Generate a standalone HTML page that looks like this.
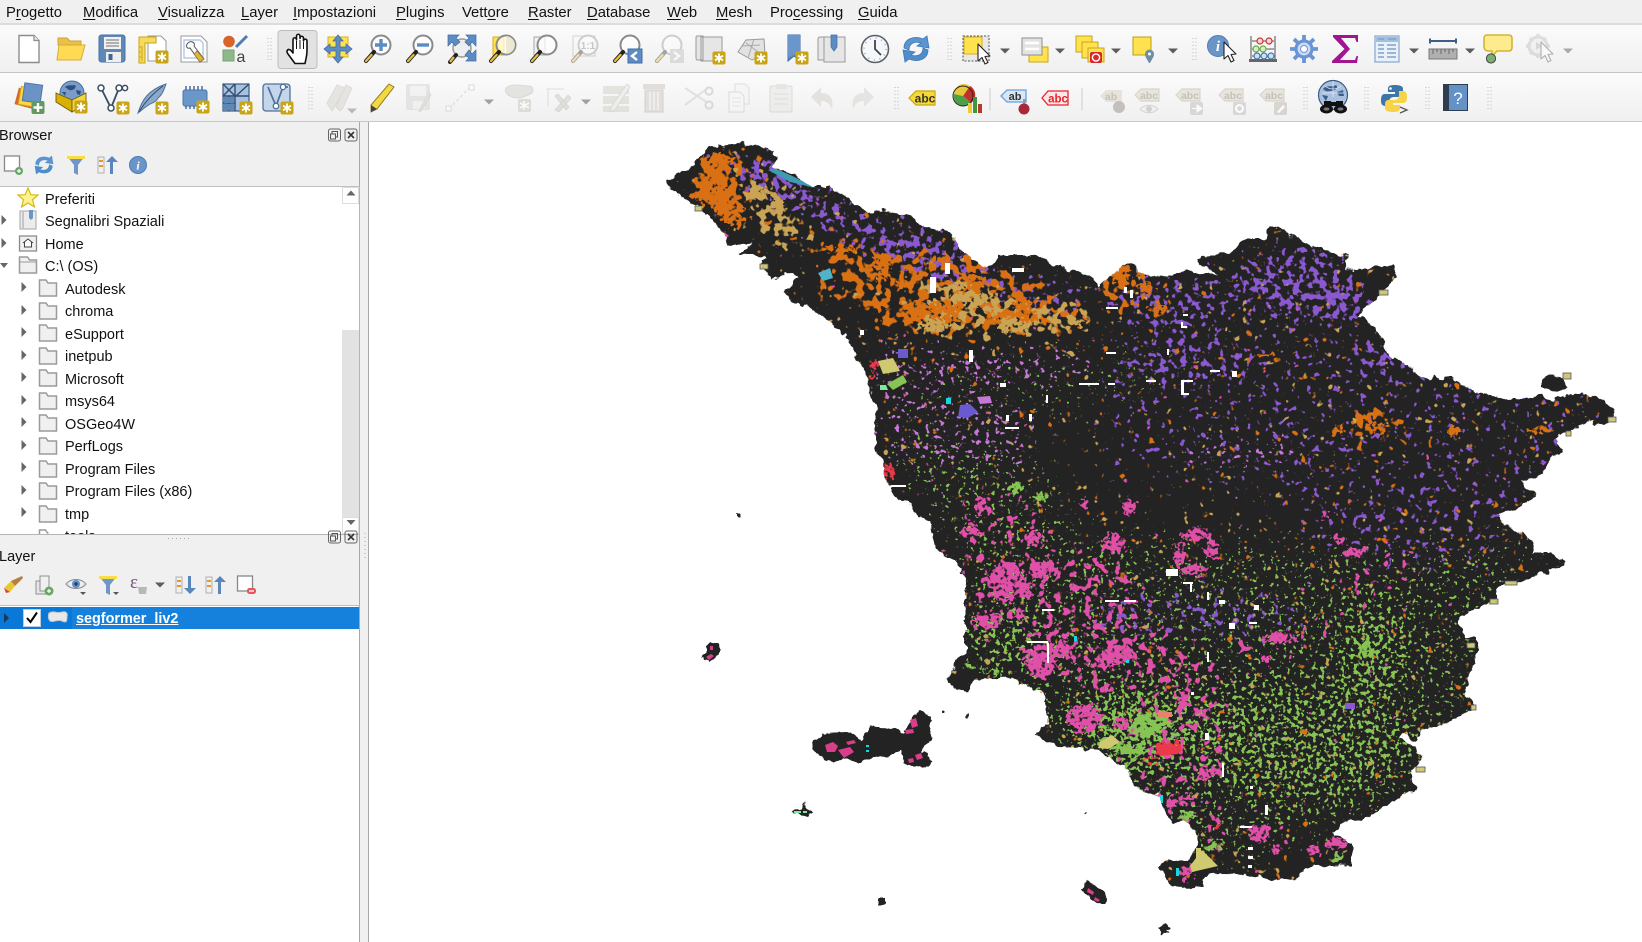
<!DOCTYPE html>
<html lang="it"><head><meta charset="utf-8"><title>QGIS</title>
<style>
html,body{margin:0;padding:0;width:1642px;height:942px;overflow:hidden;background:#f0f0f0;font-family:"Liberation Sans",sans-serif;color:#111}
.a{position:absolute;white-space:nowrap}
.m{top:4px;font-size:14.8px;line-height:18px}
.m u{text-decoration-thickness:1px;text-underline-offset:2px}
.t{font-size:14.5px;line-height:18px}
svg{position:absolute;left:0;top:0}
svg text{font-family:"Liberation Sans",sans-serif}
</style></head><body>
<div class="a" style="left:0;top:0;width:1642px;height:23px;background:#f0f0f0"></div>
<div class="a" style="left:0;top:23px;width:1642px;height:2px;background:#dcdcdc"></div>
<div class="a" style="left:0;top:25px;width:1642px;height:47px;background:linear-gradient(#fbfbfb,#f0f0f0)"></div>
<div class="a" style="left:0;top:72px;width:1642px;height:1px;background:#c4c4c4"></div>
<div class="a" style="left:0;top:73px;width:1642px;height:48px;background:linear-gradient(#fbfbfb,#f0f0f0)"></div>
<div class="a" style="left:0;top:121px;width:1642px;height:1px;background:#c8c8c8"></div>

<span class="a m" style="left:6px">P<u>r</u>ogetto</span>
<span class="a m" style="left:83px"><u>M</u>odifica</span>
<span class="a m" style="left:158px"><u>V</u>isualizza</span>
<span class="a m" style="left:241px"><u>L</u>ayer</span>
<span class="a m" style="left:293px"><u>I</u>mpostazioni</span>
<span class="a m" style="left:396px"><u>P</u>lugins</span>
<span class="a m" style="left:462px">Vett<u>o</u>re</span>
<span class="a m" style="left:528px"><u>R</u>aster</span>
<span class="a m" style="left:587px"><u>D</u>atabase</span>
<span class="a m" style="left:667px"><u>W</u>eb</span>
<span class="a m" style="left:716px"><u>M</u>esh</span>
<span class="a m" style="left:770px">Pro<u>c</u>essing</span>
<span class="a m" style="left:858px"><u>G</u>uida</span>

<!-- canvas -->
<div class="a" style="left:368px;top:122px;width:1274px;height:820px;background:#fff;border-left:1px solid #a8a8a8;box-sizing:border-box"></div>

<!-- map -->
<svg width="1642" height="942" viewBox="0 0 1642 942">
<defs>
<path id="tus" d="M665 182L673 177 690 168 702 157 710 147 740 143 767 147 778 157 772 167 797 178 813 187 830 187 857 205 867 213 880 210 907 214 927 228 950 232 962 250 983 267 993 265 998 255 1033 255 1053 265 1093 277 1098 287 1123 265 1133 261 1136 264 1138 272 1160 278 1186 271 1218 275 1200 265 1197 258 1231 252 1245 238 1264 238 1269 228 1280 225 1290 235 1304 243 1325 252 1349 255 1345 268 1366 270 1377 265 1396 267 1394 278 1383 293 1366 308 1359 315 1375 327 1383 340 1390 357 1409 365 1420 377 1453 378 1473 392 1504 397 1511 400 1542 395 1553 400 1577 393 1598 397 1615 408 1612 420 1594 427 1591 420 1577 427 1556 438 1561 448 1549 463 1539 477 1520 482 1537 495 1529 502 1497 517 1513 528 1534 540 1532 553 1549 553 1565 560 1563 565 1542 573 1525 580 1497 587 1497 602 1463 613 1459 622 1463 638 1477 640 1480 647 1475 657 1466 687 1465 695 1472 700 1475 708 1446 723 1421 730 1415 740 1404 733 1399 738 1415 748 1423 757 1411 773 1418 787 1401 797 1387 807 1366 817 1342 823 1338 830 1332 833 1351 842 1351 865 1318 867 1304 868 1299 877 1283 882 1254 877 1228 873 1205 875 1204 885 1183 890 1166 880 1160 867 1167 860 1190 862 1197 843 1193 827 1183 820 1176 823 1166 813 1159 797 1135 787 1124 767 1100 750 1057 745 1033 735 1047 725 1048 703 1040 692 1018 683 1017 678 975 679 968 692 958 692 947 680 960 657 965 655 965 578 957 565 937 550 930 523 907 503 892 497 892 487 884 480 883 460 878 455 873 425 878 405 872 398 867 375 858 360 848 335 842 333 823 315 782 295 798 278 787 272 773 280 760 265 767 257 737 253 753 242 727 247 725 235 703 210 677 195Z"/>
<clipPath id="tc"><use href="#tus"/></clipPath>
<filter id="rough" filterUnits="userSpaceOnUse" x="360" y="120" width="1282" height="822" color-interpolation-filters="sRGB">
<feTurbulence type="fractalNoise" baseFrequency=".09" numOctaves="3" seed="5" result="n"/>
<feDisplacementMap in="SourceGraphic" in2="n" scale="10" xChannelSelector="R" yChannelSelector="G"/>
</filter>
<filter id="rough2" filterUnits="userSpaceOnUse" x="360" y="120" width="1282" height="822" color-interpolation-filters="sRGB">
<feTurbulence type="fractalNoise" baseFrequency=".16" numOctaves="2" seed="11" result="n"/>
<feDisplacementMap in="SourceGraphic" in2="n" scale="15" xChannelSelector="R" yChannelSelector="G" result="d"/>
<feTurbulence type="fractalNoise" baseFrequency=".24" numOctaves="2" seed="31"/>
<feColorMatrix type="matrix" values="0 0 0 0 0 0 0 0 0 0 0 0 0 0 0 8 0 0 0 -2.6" result="h"/>
<feComposite in="d" in2="h" operator="in"/>
</filter>
<filter id="fP" filterUnits="userSpaceOnUse" x="360" y="120" width="1282" height="822" color-interpolation-filters="sRGB">
<feGaussianBlur in="SourceAlpha" stdDeviation="12" result="b"/>
<feTurbulence type="fractalNoise" baseFrequency=".15" numOctaves="2" seed="3"/>
<feColorMatrix type="matrix" values="0 0 0 0 0 0 0 0 0 0 0 0 0 0 0 1 0 0 0 0" result="na"/>
<feComposite in="na" in2="b" operator="arithmetic" k1="0" k2="1" k3=".4" k4="0"/>
<feComponentTransfer result="m"><feFuncA type="linear" slope="15" intercept="-12.4"/></feComponentTransfer>
<feFlood flood-color="#8a58cf"/><feComposite in2="m" operator="in"/>
</filter>
<filter id="fO" filterUnits="userSpaceOnUse" x="360" y="120" width="1282" height="822" color-interpolation-filters="sRGB">
<feGaussianBlur in="SourceAlpha" stdDeviation="10" result="b"/>
<feTurbulence type="fractalNoise" baseFrequency=".11" numOctaves="2" seed="17"/>
<feColorMatrix type="matrix" values="0 0 0 0 0 0 0 0 0 0 0 0 0 0 0 1 0 0 0 0" result="na"/>
<feComposite in="na" in2="b" operator="arithmetic" k1="0" k2="1" k3=".4" k4="0"/>
<feComponentTransfer result="m"><feFuncA type="linear" slope="15" intercept="-11"/></feComponentTransfer>
<feFlood flood-color="#da7014"/><feComposite in2="m" operator="in"/>
</filter>
<filter id="fT" filterUnits="userSpaceOnUse" x="360" y="120" width="1282" height="822" color-interpolation-filters="sRGB">
<feGaussianBlur in="SourceAlpha" stdDeviation="8" result="b"/>
<feTurbulence type="fractalNoise" baseFrequency=".12" numOctaves="2" seed="23"/>
<feColorMatrix type="matrix" values="0 0 0 0 0 0 0 0 0 0 0 0 0 0 0 1 0 0 0 0" result="na"/>
<feComposite in="na" in2="b" operator="arithmetic" k1="0" k2="1" k3=".4" k4="0"/>
<feComponentTransfer result="m"><feFuncA type="linear" slope="15" intercept="-11"/></feComponentTransfer>
<feFlood flood-color="#c9a455"/><feComposite in2="m" operator="in"/>
</filter>
<filter id="fG" filterUnits="userSpaceOnUse" x="360" y="120" width="1282" height="822" color-interpolation-filters="sRGB">
<feGaussianBlur in="SourceAlpha" stdDeviation="16" result="b"/>
<feTurbulence type="fractalNoise" baseFrequency=".24" numOctaves="2" seed="41"/>
<feColorMatrix type="matrix" values="0 0 0 0 0 0 0 0 0 0 0 0 0 0 0 1 0 0 0 0" result="na"/>
<feComposite in="na" in2="b" operator="arithmetic" k1="0" k2="1" k3=".4" k4="0"/>
<feComponentTransfer result="m"><feFuncA type="linear" slope="15" intercept="-12.7"/></feComponentTransfer>
<feFlood flood-color="#86c553"/><feComposite in2="m" operator="in"/>
</filter>
<filter id="fK" filterUnits="userSpaceOnUse" x="360" y="120" width="1282" height="822" color-interpolation-filters="sRGB">
<feGaussianBlur in="SourceAlpha" stdDeviation="9" result="b"/>
<feTurbulence type="fractalNoise" baseFrequency=".13" numOctaves="2" seed="61"/>
<feColorMatrix type="matrix" values="0 0 0 0 0 0 0 0 0 0 0 0 0 0 0 1 0 0 0 0" result="na"/>
<feComposite in="na" in2="b" operator="arithmetic" k1="0" k2="1" k3=".4" k4="0"/>
<feComponentTransfer result="m"><feFuncA type="linear" slope="15" intercept="-11.8"/></feComponentTransfer>
<feFlood flood-color="#e04fa8"/><feComposite in2="m" operator="in"/>
</filter>
<filter id="fL" filterUnits="userSpaceOnUse" x="360" y="120" width="1282" height="822" color-interpolation-filters="sRGB">
<feGaussianBlur in="SourceAlpha" stdDeviation="10" result="b"/>
<feTurbulence type="fractalNoise" baseFrequency=".2" numOctaves="2" seed="77"/>
<feColorMatrix type="matrix" values="0 0 0 0 0 0 0 0 0 0 0 0 0 0 0 1 0 0 0 0" result="na"/>
<feComposite in="na" in2="b" operator="arithmetic" k1="0" k2="1" k3=".4" k4="0"/>
<feComponentTransfer result="m"><feFuncA type="linear" slope="15" intercept="-12.4"/></feComponentTransfer>
<feFlood flood-color="#c777d8"/><feComposite in2="m" operator="in"/>
</filter>
</defs>

<g filter="url(#rough)" fill="#232323">
<use href="#tus"/>
<path d="M812 740L823 733 847 732 862 740 868 727 893 728 902 733 920 710 932 717 930 743 920 750 930 760 925 768 907 765 902 747 887 758 873 757 860 762 827 760 813 750Z"/>
<path d="M708 643H717L721 652 710 663 702 657 708 652Z"/>
<path d="M792 812L803 808 805 799 807 807 812 812 808 818 793 816Z"/>
<path d="M1082 890L1088 880 1105 893 1103 905 1093 900Z"/>
<path d="M1542 378L1552 376 1563 378 1570 387 1553 393 1542 387Z"/>
<path d="M878 899H887V905H878Z"/>
<path d="M1160 928L1165 923 1170 925 1166 928 1169 931 1164 934Z"/>
<rect x="736" y="514" width="6" height="3"/><circle cx="943" cy="712" r="1.5"/><circle cx="969" cy="715" r="1.5"/><circle cx="1087" cy="814" r="1"/>
</g>

<!-- edge tan rects -->
<g fill="#cfc77c" stroke="#555" stroke-width=".8">
<rect x="1379" y="290" width="9" height="5"/><rect x="1563" y="373" width="8" height="6"/><rect x="1608" y="417" width="8" height="5"/><rect x="1566" y="431" width="5" height="5"/><rect x="1505" y="581" width="12" height="4"/><rect x="1490" y="599" width="8" height="5"/><rect x="1467" y="643" width="8" height="5"/><rect x="1471" y="705" width="5" height="5"/><rect x="1416" y="767" width="9" height="5"/><rect x="760" y="264" width="8" height="5"/><rect x="695" y="206" width="7" height="5"/>
</g>

<g clip-path="url(#tc)">
<g filter="url(#fG)" fill="#000">
<path d="M880 430L1000 440 1100 530 1300 540 1480 540 1540 520 1480 700 1400 800 1330 840 1200 880 1170 830 1030 730 960 650 960 560 900 480Z" fill-opacity=".5"/>
<ellipse cx="1135" cy="730" rx="60" ry="45" fill-opacity=".85"/>
<ellipse cx="1370" cy="650" rx="35" ry="45" fill-opacity=".7"/>
<ellipse cx="1300" cy="740" rx="120" ry="60" fill-opacity=".56"/>
<ellipse cx="1000" cy="640" rx="45" ry="20" fill-opacity=".75"/>
<path d="M960 350L1180 350 1150 420 880 420Z" fill-opacity=".36"/>
</g>
<g filter="url(#fP)" fill="#000">
<path d="M690 168L770 150 860 215 960 240 1000 280 1090 288 1075 320 950 290 860 250 780 205Z" fill-opacity=".92"/>
<ellipse cx="1295" cy="285" rx="65" ry="42" fill-opacity=".8"/>
<ellipse cx="1345" cy="305" rx="28" ry="22" fill-opacity=".85"/>
<ellipse cx="1170" cy="300" rx="70" ry="28" fill-opacity=".72"/>
<path d="M1100 330L1400 330 1600 410 1530 500 1380 520 1100 470Z" fill-opacity=".42"/>
<ellipse cx="1380" cy="360" rx="25" ry="14" fill-opacity=".85"/>
<ellipse cx="1190" cy="360" rx="60" ry="26" fill-opacity=".56"/>
<path d="M1090 590L1300 590 1300 640 1090 640Z" fill-opacity=".62"/>
<path d="M1300 500L1530 500 1480 580 1300 560Z" fill-opacity=".46"/>
</g>
<g filter="url(#fL)" fill="#000">
<path d="M860 340L1100 350 1090 380 880 400Z" fill-opacity=".55"/>
<path d="M880 400L1040 400 1040 470 880 470Z" fill-opacity=".52"/>
<path d="M1180 440L1300 430 1300 470 1180 470Z" fill-opacity=".5"/>
</g>
<g filter="url(#fO)" fill="#000">
<path d="M700 150L745 155 745 225 690 200Z" fill-opacity=".85"/>
<path d="M820 240L1000 260 1100 330 900 340 820 290Z" fill-opacity=".62"/>
<ellipse cx="1120" cy="285" rx="35" ry="20" fill-opacity=".66"/>
<ellipse cx="1370" cy="425" rx="35" ry="18" fill-opacity=".6"/>
</g>
<g filter="url(#fT)" fill="#000">
<path d="M730 170L790 190 810 250 760 240Z" fill-opacity=".65"/>
<path d="M920 280L1100 310 1050 335 930 330Z" fill-opacity=".7"/>
</g>
<g filter="url(#fK)" fill="#000">
<path d="M965 490L1040 500 1060 560 1000 620 960 600Z" fill-opacity=".42"/>
<path d="M1060 540L1130 560 1190 680 1090 690 1010 650Z" fill-opacity=".55"/>
<path d="M1260 640L1320 620 1360 560 1410 530 1430 560 1300 660Z" fill-opacity=".42"/>
<path d="M1180 640L1230 660 1230 830 1330 840 1180 850 1100 740Z" fill-opacity=".42"/>
</g>

<g filter="url(#rough2)">
<g fill="#da7014">
<path d="M704 160L722 150 736 160 720 172 728 192 742 205 745 218 735 228 722 218 708 205 690 197 702 182Z"/>
<ellipse cx="840" cy="250" rx="14" ry="5"/><ellipse cx="882" cy="262" rx="11" ry="8"/><ellipse cx="880" cy="276" rx="13" ry="4"/><path d="M905 303H960V322H905Z"/><path d="M985 312H1038V325H985Z"/><ellipse cx="970" cy="282" rx="14" ry="8"/><ellipse cx="942" cy="260" rx="8" ry="4"/><ellipse cx="1022" cy="305" rx="9" ry="7"/><ellipse cx="903" cy="285" rx="5" ry="5"/><ellipse cx="1121" cy="275" rx="10" ry="8"/><ellipse cx="1145" cy="287" rx="9" ry="4"/><ellipse cx="1159" cy="310" rx="8" ry="7"/><ellipse cx="1376" cy="427" rx="11" ry="5"/><ellipse cx="1366" cy="418" rx="8" ry="4"/><ellipse cx="1338" cy="430" rx="6" ry="4"/><ellipse cx="1454" cy="432" rx="8" ry="4"/><ellipse cx="1540" cy="431" rx="14" ry="3"/><ellipse cx="1266" cy="355" rx="10" ry="3"/><ellipse cx="1472" cy="447" rx="3" ry="2"/>
</g>
<g fill="#c9a455">
<ellipse cx="760" cy="193" rx="10" ry="7"/><ellipse cx="777" cy="205" rx="6" ry="8"/><ellipse cx="973" cy="298" rx="22" ry="6"/><ellipse cx="933" cy="325" rx="16" ry="8"/><ellipse cx="1013" cy="326" rx="14" ry="8"/><ellipse cx="957" cy="285" rx="11" ry="4"/><ellipse cx="1077" cy="322" rx="11" ry="3"/>
</g>
<g fill="#e04fa8">
<ellipse cx="1007" cy="582" rx="18" ry="20"/><ellipse cx="1043" cy="570" rx="16" ry="9"/><ellipse cx="1025" cy="590" rx="10" ry="7"/><ellipse cx="987" cy="620" rx="15" ry="8"/><ellipse cx="1017" cy="615" rx="8" ry="5"/><ellipse cx="1040" cy="662" rx="16" ry="17"/><ellipse cx="1060" cy="650" rx="12" ry="9"/><ellipse cx="1085" cy="718" rx="18" ry="14"/><ellipse cx="1113" cy="543" rx="12" ry="10"/><ellipse cx="1128" cy="507" rx="7" ry="8"/><ellipse cx="980" cy="505" rx="6" ry="8"/><ellipse cx="970" cy="530" rx="10" ry="6"/><ellipse cx="1033" cy="538" rx="10" ry="6"/><ellipse cx="1110" cy="658" rx="12" ry="9"/><ellipse cx="1195" cy="535" rx="14" ry="6"/><ellipse cx="1180" cy="555" rx="6" ry="12"/><ellipse cx="1212" cy="550" rx="6" ry="10"/><ellipse cx="1195" cy="570" rx="13" ry="5"/><ellipse cx="1355" cy="552" rx="12" ry="5"/><ellipse cx="1338" cy="540" rx="5" ry="4"/><ellipse cx="1325" cy="513" rx="3" ry="5"/><ellipse cx="1119" cy="655" rx="16" ry="10"/><ellipse cx="1278" cy="638" rx="16" ry="5"/><ellipse cx="1121" cy="723" rx="8" ry="7"/><ellipse cx="1207" cy="773" rx="9" ry="8"/><ellipse cx="1259" cy="833" rx="11" ry="8"/><ellipse cx="1335" cy="843" rx="10" ry="6"/><ellipse cx="1314" cy="850" rx="8" ry="4"/><ellipse cx="1278" cy="850" rx="5" ry="4"/><ellipse cx="1186" cy="873" rx="6" ry="7"/><ellipse cx="1183" cy="700" rx="5" ry="10"/><ellipse cx="1204" cy="715" rx="6" ry="4"/><ellipse cx="1188" cy="797" rx="8" ry="4"/><ellipse cx="1171" cy="803" rx="5" ry="7"/><ellipse cx="1107" cy="688" rx="6" ry="5"/><ellipse cx="1245" cy="648" rx="6" ry="5"/><ellipse cx="1266" cy="660" rx="4" ry="5"/><ellipse cx="1083" cy="503" rx="5" ry="4"/>
</g>
<g fill="#86c553">
<ellipse cx="1145" cy="727" rx="14" ry="13"/><ellipse cx="1131" cy="750" rx="17" ry="6"/><ellipse cx="1163" cy="720" rx="6" ry="8"/><ellipse cx="1017" cy="488" rx="7" ry="6"/><ellipse cx="1040" cy="498" rx="6" ry="4"/><ellipse cx="972" cy="667" rx="5" ry="3"/><ellipse cx="990" cy="672" rx="10" ry="2"/><ellipse cx="1212" cy="847" rx="10" ry="4"/><ellipse cx="1368" cy="650" rx="6" ry="8"/><ellipse cx="1338" cy="858" rx="7" ry="4"/><ellipse cx="1187" cy="815" rx="10" ry="5"/>
</g>
<g fill="#e9394a">
<ellipse cx="1168" cy="748" rx="14" ry="6"/><ellipse cx="1150" cy="760" rx="10" ry="2"/><ellipse cx="890" cy="472" rx="5" ry="8"/><ellipse cx="873" cy="368" rx="3" ry="8"/><ellipse cx="1220" cy="827" rx="3" ry="3"/>
</g>
</g>
<!-- solid (crisp) features -->
<path d="M878 361L893 358 900 371 883 374Z" fill="#cfca70"/>
<path d="M887 384L903 375 907 382 893 390Z" fill="#86c553"/>
<path d="M898 349H908L908 358 898 358Z" fill="#6a5acd"/>
<path d="M960 405L970 404 978 412 968 418 958 417Z" fill="#6a5acd"/>
<path d="M977 397L990 396 992 403 980 404Z" fill="#c777d8"/>
<path d="M880 385H886L888 390 880 390Z" fill="#7ee8a0"/>
<path d="M946 398H951V404H946Z" fill="#16d6de"/>
<path d="M818 273L830 268 833 278 823 281Z" fill="#4fb3cc"/>
<path d="M768 170L778 168 800 180 813 187 820 189 790 182Z" fill="#3e9bb0"/>
<path d="M1100 742L1112 735 1120 742 1108 749 1098 748Z" fill="#cfca70"/>
<path d="M1190 866L1202 850 1218 866 1192 872Z" fill="#cfca70"/>
<rect x="1196" y="848" width="5" height="12" fill="#cfca70"/>
<path d="M1155 747L1170 743 1182 748 1178 754 1160 756Z" fill="#e9394a"/>
<path d="M1158 712h14v5h-14z" fill="#e8806e"/>
<path d="M1345 703h10v6h-10z" fill="#8a58cf"/>
<rect x="1126" y="660" width="3" height="3" fill="#16d6de"/>
<rect x="1176" y="868" width="3" height="8" fill="#16d6de"/>
<rect x="1160" y="795" width="3" height="8" fill="#16d6de"/>
<rect x="1074" y="636" width="3" height="5" fill="#16d6de"/>
<!-- nodata gaps -->
<g fill="#fff">
<rect x="969" y="350" width="4" height="12"/><rect x="930" y="277" width="6" height="16"/><rect x="945" y="263" width="5" height="11"/><rect x="1012" y="268" width="12" height="4"/><rect x="1079" y="383" width="20" height="2"/><rect x="1108" y="383" width="7" height="2"/><rect x="1006" y="415" width="3" height="6"/><rect x="1005" y="427" width="14" height="2"/><rect x="1029" y="414" width="3" height="7"/><rect x="1046" y="395" width="2" height="8"/><rect x="1000" y="383" width="6" height="4"/><rect x="1181" y="380" width="3" height="14"/><rect x="1181" y="380" width="12" height="2"/><rect x="1181" y="393" width="8" height="2"/><rect x="1210" y="370" width="10" height="2"/><rect x="1232" y="371" width="5" height="6"/><rect x="1146" y="380" width="10" height="2"/><rect x="1167" y="349" width="2" height="6"/><rect x="1183" y="314" width="5" height="2"/><rect x="1181" y="326" width="6" height="2"/><rect x="1181" y="322" width="2" height="6"/><rect x="1106" y="352" width="10" height="2"/><rect x="1124" y="287" width="3" height="6"/><rect x="1130" y="290" width="3" height="8"/><rect x="1106" y="307" width="12" height="2"/><rect x="1166" y="569" width="12" height="7"/><rect x="1183" y="582" width="10" height="2"/><rect x="1190" y="582" width="2" height="10"/><rect x="1207" y="592" width="2" height="8"/><rect x="1219" y="600" width="6" height="4"/><rect x="1254" y="605" width="5" height="5"/><rect x="1229" y="623" width="6" height="6"/><rect x="1249" y="622" width="8" height="2"/><rect x="1207" y="652" width="2" height="10"/><rect x="1124" y="600" width="12" height="2"/><rect x="1191" y="692" width="3" height="3"/><rect x="1205" y="733" width="4" height="7"/><rect x="1222" y="763" width="2" height="14"/><rect x="1250" y="786" width="3" height="3"/><rect x="1265" y="805" width="3" height="10"/><rect x="1240" y="826" width="12" height="2"/><rect x="1248" y="847" width="5" height="3"/><rect x="1248" y="856" width="5" height="3"/><rect x="1248" y="865" width="4" height="3"/><rect x="891" y="485" width="15" height="2"/><rect x="1047" y="643" width="2" height="20"/><rect x="1027" y="641" width="21" height="2"/><rect x="1042" y="609" width="12" height="2"/><rect x="1105" y="600" width="14" height="2"/><rect x="860" y="330" width="4" height="5"/>
</g>
</g>
<!-- island colours -->
<g fill="#d83f8a"><path d="M825 745l8-3 5 4-3 6-8 0z"/><path d="M838 750l12-3 4 5-10 6z"/><path d="M846 742l8-2 2 3-8 2z"/><path d="M910 720l6-2 2 8-6 2z"/><path d="M905 730l8-1 1 4-8 1z"/><path d="M915 755l6-2 2 5-6 2z"/><path d="M908 759l5-1 1 4-5 1z"/><path d="M706 657l5-3 3 2-5 4z"/><path d="M710 646h3v4h-3z"/><path d="M1088 888l6 4-1 3-6-3z"/><path d="M1095 897l5 3-2 2-4-2z"/></g>
<g fill="#7ee8a0"><rect x="794" y="811" width="7" height="2"/><rect x="803" y="811" width="4" height="2"/></g>
<g fill="#16d6de"><rect x="866" y="745" width="3" height="2"/><rect x="866" y="750" width="3" height="2"/></g>
</svg>

<!-- left docks -->
<div class="a" style="left:0;top:122px;width:368px;height:820px;background:#f0f0f0"></div>
<div class="a" style="left:359px;top:122px;width:1px;height:820px;background:#a8a8a8"></div>
<span class="a t" style="left:-1px;top:127px">Browser</span>
<div class="a" style="left:0;top:186px;width:360px;height:349px;background:#fff;border-top:1px solid #c0c0c0;border-bottom:1px solid #b5b5b5;border-right:1px solid #b5b5b5;box-sizing:border-box;overflow:hidden">
<div class="a" style="left:342px;top:0;width:17px;height:347px;background:#fff"></div>
<div class="a" style="left:342px;top:143px;width:17px;height:187px;background:#e2e2e2"></div>
<div class="a" style="left:342px;top:0;width:17px;height:17px;background:#fff;border:1px solid #ddd;box-sizing:border-box"></div>
<div class="a" style="left:342px;top:330px;width:17px;height:17px;background:#fff;border:1px solid #ddd;box-sizing:border-box"></div>
<span class="a t" style="left:45px;top:4px">Preferiti</span>
<span class="a t" style="left:45px;top:26px">Segnalibri Spaziali</span>
<span class="a t" style="left:45px;top:49px">Home</span>
<span class="a t" style="left:45px;top:71px">C:\ (OS)</span>
<span class="a t" style="left:65px;top:94px">Autodesk</span>
<span class="a t" style="left:65px;top:116px">chroma</span>
<span class="a t" style="left:65px;top:139px">eSupport</span>
<span class="a t" style="left:65px;top:161px">inetpub</span>
<span class="a t" style="left:65px;top:184px">Microsoft</span>
<span class="a t" style="left:65px;top:206px">msys64</span>
<span class="a t" style="left:65px;top:229px">OSGeo4W</span>
<span class="a t" style="left:65px;top:251px">PerfLogs</span>
<span class="a t" style="left:65px;top:274px">Program Files</span>
<span class="a t" style="left:65px;top:296px">Program Files (x86)</span>
<span class="a t" style="left:65px;top:319px">tmp</span>
<span class="a t" style="left:65px;top:341px">tools</span>
</div>
<span class="a t" style="left:-1px;top:548px">Layer</span>
<div class="a" style="left:0;top:605px;width:360px;height:337px;background:#fff;border-top:1px solid #c0c0c0;border-right:1px solid #a8a8a8;box-sizing:border-box"></div>
<div class="a" style="left:0;top:607px;width:359px;height:22px;background:#1581dd"></div>
<div class="a" style="left:0;top:607px;width:72px;height:22px;background:#0a78d7"></div>
<span class="a" style="left:76px;top:610px;font-size:14.4px;line-height:18px;font-weight:bold;color:#fff;text-decoration:underline">segformer_liv2</span>

<!-- icons -->
<svg width="1642" height="942" viewBox="0 0 1642 942">
<defs>
<g id="nb"><rect x="-6.5" y="-6.5" width="13" height="13" rx="2" fill="#c9a516"/><path d="M0-4.5V4.5M-4-2.3L4 2.3M-4 2.3L4-2.3" stroke="#fff" stroke-width="1.8"/></g>
<g id="mag"><circle cx="3" cy="-4" r="9.5" fill="#fff" fill-opacity=".7" stroke="#8a8a8a" stroke-width="2"/><path d="M-4 3L-12 12" stroke="#222" stroke-width="4" stroke-linecap="round"/><path d="M-6.5 6L-12 12" stroke="#e8bf3c" stroke-width="2.3" stroke-linecap="round"/></g>
<path id="car" d="M-5-2.5h10l-5 5z" fill="#5c5c5c"/>
<g id="grip"><path d="M0-11V11M3-11V11" stroke="#b5b5b5" stroke-width="1" stroke-dasharray="1 2.5"/></g>
<g id="fo"><path d="M-8.5-8h6.5l2 3h8.5v13h-17z" fill="#f0f0f0" stroke="#9a9a9a" stroke-width="1.5"/></g>
<path id="ar" d="M-2.5-5L2.5 0-2.5 5z" fill="#666"/>
<g id="tag"><path d="M-12 0L-6-6H12V6H-6Z" fill="#e3e0d8" stroke="#cfcabd" stroke-width="1.2"/><text x="2" y="4" font-size="10.5" font-weight="bold" fill="#b5b0a3" text-anchor="middle">abc</text></g>
<g id="cur"><path d="M0-10L0 7 4 3.5 7 10 10 8.5 7 2.5 12 2Z" fill="#fff" stroke="#222" stroke-width="1.1" stroke-linejoin="round"/></g>
</defs>

<!-- ROW 1 -->
<g transform="translate(29,49)"><path d="M-10-13.5H5L10-8.5V13.5H-10Z" fill="#fff" stroke="#8d8d8d" stroke-width="1.4"/><path d="M5-13.5V-8.5H10" fill="#e8e8e8" stroke="#8d8d8d" stroke-width="1.2"/></g>
<g transform="translate(71,49)"><path d="M-13-11H-4L-1-8H10V-4H-13Z" fill="#e8c04a" stroke="#cfa52d"/><path d="M-14 11L-12-4H14L10 11Z" fill="#ffda55" stroke="#d2ad35"/></g>
<g transform="translate(112,49)"><rect x="-13" y="-14" width="26" height="27" rx="2.5" fill="#5f88ba" stroke="#4a709e"/><rect x="-8" y="-12" width="17" height="12" fill="#f1f1f1"/><path d="M-6-9H7M-6-6H7M-6-3H7" stroke="#8a8a8a" stroke-width="1.2"/><rect x="-6" y="3" width="15" height="10" fill="#eee"/><rect x="-3.5" y="5" width="4" height="6" fill="#3f6594"/></g>
<g transform="translate(153,49)"><path d="M-5-13H8L13-8V12H-5Z" fill="#fff" stroke="#999"/><path d="M-14-12H3V-6H-8V14H-14Z" fill="#f6dc5a" stroke="#c9a516"/><path d="M-11-3V12M-14-2H-12M-14 3H-12M-14 8H-12" stroke="#c9a516"/><use href="#nb" x="9" y="8"/></g>
<g transform="translate(194,49)"><path d="M-13-13H7L13-7V13H-13Z" fill="#fff" stroke="#9a9a9a"/><path d="M-10-9H6L9-6V9H-10Z" fill="none" stroke="#b4c8e6" stroke-width="1.4"/><path d="M-6-6C-3-9 2-6 0-3L10 10 6 13-4-1C-7 0-9-3-6-6Z" fill="#fff" stroke="#555"/><path d="M3 2L10 10 6 13 0 5Z" fill="#e0b63a" stroke="#8d7a2c" stroke-width=".8"/></g>
<g transform="translate(235,49)"><circle cx="-6" cy="-7.5" r="5.8" fill="#d8642c"/><path d="M1-2L12-13" stroke="#4f7cb5" stroke-width="3"/><rect x="-12" y="1" width="11" height="11" fill="#8fb98a" stroke="#7ba07a"/><text x="6" y="13" font-size="16" fill="#444" text-anchor="middle">a</text></g>
<use href="#grip" x="268" y="49"/>
<rect x="278" y="30.5" width="39" height="38" rx="3" fill="#e2e2e2" stroke="#bdbdbd"/>
<g transform="translate(298,49)"><path d="M-3 14.5L-10 5C-12.5 1.5-9.5-1-7 1.5L-5 4V-9C-5-12-1.5-12-1.5-9V-12.5C-1.5-15.5 2-15.5 2-12.5V-10.5C2-13.5 5.5-13.5 5.5-10.5V-8C5.5-10.5 9-10.5 9-8V2C9 7 8 9 7 14.5Z" fill="#fff" stroke="#111" stroke-width="1.6" stroke-linejoin="round"/><path d="M-1.5-8V0M2-9V0M5.5-7V0" stroke="#111"/></g>
<g transform="translate(338,49)"><rect x="-10" y="-12" width="20" height="20" fill="#ffe24d" stroke="#d5ae20"/><path d="M0-14L5-8H2V-2H8V-5L14 0 8 5V2H2V8H5L0 14-5 8H-2V2H-8V5L-14 0-8-5V-2H-2V-8H-5Z" fill="#5d8cc3" stroke="#3e6da5" stroke-width=".8"/></g>
<g transform="translate(378,49)"><use href="#mag"/><path d="M3-10V2M-3-4H9" stroke="#5d8cc3" stroke-width="3.4"/></g>
<g transform="translate(420,49)"><use href="#mag"/><path d="M-3-4H9" stroke="#5d8cc3" stroke-width="3.4"/></g>
<g transform="translate(462,49)"><circle cx="0" cy="-1" r="9" fill="#eee" stroke="#999" stroke-width="1.5"/><path d="M-14-14H-3L-6-11-2-7-7-3-10-7-14-3ZM14-14H4L7-11 3-7 7-3 10-7 14-3ZM14 12H4L7 9 3 6 7 1 10 5 14 1Z" fill="#5d8cc3" stroke="#3e6da5" stroke-width=".7"/><path d="M-6 6L-12 13" stroke="#222" stroke-width="4" stroke-linecap="round"/><path d="M-8 8L-12 13" stroke="#e8bf3c" stroke-width="2.3"/></g>
<g transform="translate(503,49)"><rect x="-10" y="-12" width="11" height="18" fill="#ffe24d" stroke="#d5ae20"/><use href="#mag"/><path d="M3-13A9 9 0 0 1 3 5Z" fill="#e8e2c8" fill-opacity=".8"/></g>
<g transform="translate(544,49)"><rect x="-10" y="-12" width="11" height="18" fill="#f1f1f1" stroke="#a8a8a8"/><use href="#mag"/></g>
<g transform="translate(585,49)" opacity=".38"><rect x="-12" y="-13" width="22" height="20" fill="none" stroke="#999"/><use href="#mag"/><text x="3" y="0" font-size="10" font-weight="bold" fill="#777" text-anchor="middle">1:1</text></g>
<g transform="translate(627,49)"><use href="#mag"/><rect x="1" y="0" width="14" height="14" fill="#5d8cc3" stroke="#3e6da5"/><path d="M10 3L5 7 10 11" fill="none" stroke="#fff" stroke-width="2.4"/></g>
<g transform="translate(669,49)" opacity=".38"><use href="#mag"/><rect x="1" y="0" width="14" height="14" fill="#b5b5b5"/><path d="M5 3L10 7 5 11" fill="none" stroke="#fff" stroke-width="2.4"/></g>
<g transform="translate(710,49)"><path d="M-13-13H-7V11H-13C-14 11-14 9-14 8V-10C-14-12-14-13-13-13ZM-9-12H12V12H-9Z" fill="#e6e6e6" stroke="#999"/><use href="#nb" x="9" y="9"/></g>
<g transform="translate(752,49)"><path d="M-14 3L-6-9 12-10 13 5 0 11Z" fill="#e2e2e2" stroke="#999"/><path d="M-10-3L8-4M-6-6L9 5M2-10L-4 9" stroke="#aaa"/><use href="#nb" x="9" y="9"/></g>
<g transform="translate(796,49)"><path d="M-8-14H4V12L-2 7-8 12Z" fill="#5d8cc3" stroke="#3e6da5"/><path d="M-8 8V-14H4V3L-8 8Z" fill="#6a96cb"/><use href="#nb" x="6" y="9"/></g>
<g transform="translate(833,49)"><path d="M-13-12C-15-12-15-10-15-9V11H-9V-12ZM-9-12H12V13H-9Z" fill="#e6e6e6" stroke="#999"/><path d="M-2-14H4V-2L1 2-2-2Z" fill="#5d8cc3" stroke="#3e6da5" stroke-width=".7"/></g>
<g transform="translate(875,49)"><circle r="13.5" fill="#f5f7fa" stroke="#5a6168" stroke-width="1.6"/><path d="M0-9V0L6 6" fill="none" stroke="#444" stroke-width="1.8"/><circle r="11" fill="none" stroke="#9ab" stroke-width="1.6" stroke-dasharray="1 4.8"/></g>
<g transform="translate(916,49)"><path d="M-12-1C-12-10-2-14 7-10L11-13 13-1 1-3 5-6C-1-8-7-6-7 1Z" fill="#5a95d0" stroke="#3e7ab8" stroke-width=".8"/><path d="M12 1C12 10 2 14-7 10L-11 13-13 1-1 3-5 6C1 8 7 6 7-1Z" fill="#4f8cca" stroke="#3e7ab8" stroke-width=".8"/></g>
<use href="#grip" x="948" y="49"/>
<g transform="translate(976,49)"><rect x="-13" y="-13" width="26" height="25" fill="#e8e8e8" stroke="#555" stroke-dasharray="2 1.5"/><rect x="-12" y="-12" width="18" height="17" fill="#ffe24d" stroke="#d5ae20"/><use href="#cur" x="2" y="5"/></g>
<use href="#car" x="1005" y="51"/>
<g transform="translate(1034,49)"><rect x="-5" y="-2" width="19" height="15" fill="#ffe24d" stroke="#c9a516"/><rect x="-12" y="-11" width="20" height="17" fill="#e3e3e3" stroke="#8f8f8f"/><path d="M-9-6H5M-9 0H5" stroke="#fff" stroke-width="2.6"/></g>
<use href="#car" x="1060" y="51"/>
<g transform="translate(1089,49)"><rect x="-13" y="-13" width="16" height="16" fill="#ffe24d" stroke="#c9a516"/><rect x="-7" y="-7" width="16" height="16" fill="#ffe24d" stroke="#c9a516"/><rect x="-1" y="-1" width="16" height="14" fill="#ffe24d" stroke="#c9a516"/><rect x="1" y="3" width="12" height="11" rx="2" fill="#d8292f"/><circle cx="7" cy="8.5" r="3.6" fill="none" stroke="#fff" stroke-width="1.4"/></g>
<use href="#car" x="1116" y="51"/>
<g transform="translate(1142,49)"><rect x="-9" y="-12" width="18" height="18" fill="#ffe24d" stroke="#b99f1c"/><path d="M7 14C5 10 3 8 3 5A4.2 4.2 0 0 1 12 5C12 8 10 10 8 14Z" fill="#6e8ea8"/><circle cx="7.5" cy="5" r="1.5" fill="#fff"/></g>
<use href="#car" x="1173" y="51"/>
<use href="#grip" x="1193" y="49"/>
<g transform="translate(1218,46)"><circle r="10.5" fill="#6a95c9" stroke="#507cb2"/><text x="0" y="5" font-size="15" font-weight="bold" font-style="italic" fill="#fff" text-anchor="middle" style="font-family:'Liberation Serif',serif">i</text></g><use href="#cur" x="1224" y="52"/>
<g transform="translate(1263,49)"><path d="M-12 13V-13M12 13V-13M-11-8H11M-11 0H11M-11 7H11" stroke="#777" stroke-width="1.3"/><rect x="-14" y="10" width="28" height="3" fill="#666"/><g fill="#f1d4d4" stroke="#c33" stroke-width="1.2"><circle cx="-3" cy="-8" r="3"/><circle cx="6" cy="-8" r="3"/></g><g fill="#d8edcb" stroke="#6a4" stroke-width="1.2"><circle cx="-7" cy="0" r="3"/><circle cx="0" cy="0" r="3"/></g><g fill="#cfe0f2" stroke="#47a" stroke-width="1.2"><circle cx="-6" cy="7" r="3"/><circle cx="1" cy="7" r="3"/><circle cx="8" cy="7" r="3"/></g></g>
<g transform="translate(1304,49)"><circle r="8" fill="#cfdcf2" stroke="#6a95d4" stroke-width="3.2"/><g stroke="#6a95d4" stroke-width="3.8"><path d="M0-14V-9M0 14V9M-14 0H-9M14 0H9M-10-10L-6-6M10 10L6 6M-10 10L-6 6M10-10L6-6"/></g><circle r="3.5" fill="#fff" stroke="#6a95d4"/></g>
<path transform="translate(1346,49)" d="M-13-14H12V-7H10.5L9-11H-5L4 0-6 11H9L10.5 7H12L11 14H-14V12L-1.5 0-13-12Z" fill="#a21592"/>
<g transform="translate(1387,49)"><rect x="-12" y="-13" width="24" height="26" fill="#e9f0f8" stroke="#8cadd2" stroke-width="1.3"/><rect x="-11" y="-12" width="22" height="5" fill="#a4bfde"/><path d="M-9-10H-3M1-10H9M-9-4H-3M0-4H9M-9 0H-3M0 0H9M-9 4H-3M0 4H9M-9 8H-3M0 8H9" stroke="#7ea2cc" stroke-width="1.5"/></g>
<use href="#car" x="1414" y="51"/>
<g transform="translate(1443,49)"><path d="M-13-8H13M-13-10.5V-5.5M13-10.5V-5.5" stroke="#3f5f86" stroke-width="2"/><rect x="-14" y="0" width="28" height="10" fill="#b0b0b0" stroke="#777"/><path d="M-10 0V5M-6 0V3M-2 0V5M2 0V3M6 0V5M10 0V3" stroke="#666"/></g>
<use href="#car" x="1470" y="51"/>
<g transform="translate(1498,49)"><path d="M-11-14H10C13-14 14-13 14-10V-2C14 1 13 2 10 2H-1L-6 7V2H-9C-13 2-14 0-14-3V-10C-14-13-13-14-11-14Z" fill="#fdeb8e" stroke="#d3b534" stroke-width="1.6"/><circle cx="-7" cy="9.5" r="4.6" fill="#7cae72" stroke="#444"/></g>
<g transform="translate(1539,49)" opacity=".33"><circle cx="-1" cy="-3" r="9" fill="#e4e4e4" stroke="#aaa" stroke-width="3"/><path d="M-1-15V-11M-1 5V9M-13-3H-9M7-3H11M-9-11L-6-8M7-11L4-8M-9 5L-6 2" stroke="#aaa" stroke-width="3.4"/><path d="M-3-7L3-3-3 1Z" fill="#999"/><use href="#cur" x="2" y="3"/></g>
<use href="#car" x="1568" y="51" opacity=".5"/>

<!-- ROW 2 -->
<g transform="translate(29.5,98)"><rect x="-13" y="-8" width="19" height="17" transform="rotate(15 -3 0)" fill="#d8662d"/><rect x="-10" y="-10" width="19" height="18" transform="rotate(10 0 0)" fill="#ffd83e" stroke="#d2ac1e"/><rect x="-6" y="-14" width="18" height="18" transform="rotate(8 3 -5)" fill="#6b93c7" stroke="#4f76a8"/><rect x="2" y="3" width="13" height="13" rx="2" fill="#619a60"/><path d="M8.5 5V14M4 9.5H13" stroke="#fff" stroke-width="2.4"/></g>
<g transform="translate(71,98)"><circle cx="1" cy="-5" r="12" fill="#7a9cc9" stroke="#47719f"/><path d="M-6-11C-3-14 1-12 4-13 6-10 2-7-2-8ZM5-8 10-7 9-3 6-4ZM-9-6-5-6-6-2Z" fill="#2f4f80"/><path d="M-15-5L1 2V14L-15 4Z" fill="#d8b000" stroke="#6b5a10" stroke-width=".9"/><path d="M1 2L15-5V5L1 14Z" fill="#f2d540" stroke="#6b5a10" stroke-width=".9"/><use href="#nb" x="10" y="9"/></g>
<g transform="translate(112,98)"><path d="M-11-10L-1 10 7-10H13" fill="none" stroke="#3a4d60" stroke-width="1.8"/><g fill="#fff" stroke="#3a4d60" stroke-width="1.5"><circle cx="-11" cy="-10" r="3"/><circle cx="-1" cy="10" r="3"/><circle cx="7" cy="-10" r="3"/><circle cx="13" cy="-10" r="2.6"/></g><use href="#nb" x="11" y="10"/></g>
<g transform="translate(152,98)"><path d="M-14 15C-10 2-4-8 14-14 12-8 10-3 6 0 5 3 1 5-2 6-5 8-8 10-14 15Z" fill="#8aa8c9" stroke="#4f7199"/><path d="M-13 14C-7 4 0-4 11-12" stroke="#2c4d75" fill="none"/><use href="#nb" x="10" y="10"/></g>
<g transform="translate(195,98)"><rect x="-12" y="-8" width="24" height="16" rx="2" fill="#6b96ca" stroke="#4a75a8"/><path d="M-9-12V-8M-5-12V-8M-1-12V-8M3-12V-8M7-12V-8M-9 8V11M-5 8V11M-1 8V11" stroke="#3f6592" stroke-width="1.4"/><use href="#nb" x="8" y="9"/></g>
<g transform="translate(236,98)"><rect x="-13" y="-14" width="26" height="27" fill="#a8c1df" stroke="#3a5b82" stroke-width="1.2"/><path d="M-13-14L-1-2M-13-2L-1-14M-1-14V13M-13-2H13M-13 5H-1M-7-2V13M13-14L0-2" stroke="#2f4e72" stroke-width="1.4"/><rect x="-12" y="-1" width="10" height="6" fill="#5f88b6"/><rect x="-12" y="6" width="10" height="6" fill="#5f88b6"/><use href="#nb" x="10" y="10"/></g>
<g transform="translate(277,98)"><rect x="-14" y="-14" width="27" height="27" rx="3" fill="#c5d6ea" stroke="#4f7199" stroke-width="1.3"/><path d="M-9-11L-1 8 6-11 11-11" fill="none" stroke="#4f7199" stroke-width="1.7"/><g fill="#fff" stroke="#4f7199" stroke-width="1.3"><circle cx="-1" cy="8" r="2.8"/><circle cx="6" cy="-11" r="2.6"/></g><use href="#nb" x="10" y="10"/></g>
<use href="#grip" x="309" y="98"/>
<!-- disabled -->
<g opacity=".55">
<g transform="translate(339,98)"><path d="M-7 13L-12 5-2-13 6-10-5 10ZM1 13L-3 9 7-13 13-10 4 10Z" fill="#d8d6d1" stroke="#c8c6c0"/></g>
<use href="#car" x="352" y="111" opacity=".7"/>
<g transform="translate(419,98)"><rect x="-13" y="-14" width="24" height="26" rx="2" fill="#d7d7d5"/><rect x="-9" y="-12" width="16" height="10" fill="#eee"/><rect x="-6" y="3" width="12" height="8" fill="#eee"/><path d="M12-3L3 12 0 14 2 9 10-6Z" fill="#d0cfc9" stroke="#bbb" stroke-width=".7"/></g>
<g transform="translate(461,98)"><path d="M-12 11L9-11" stroke="#cfcfcb" stroke-width="1.6" stroke-dasharray="3 2.5"/><rect x="-15" y="8" width="5" height="5" fill="#fff" stroke="#c4c4c4"/><rect x="8" y="-13" width="5" height="5" fill="#fff" stroke="#c4c4c4"/></g>
<use href="#car" x="489" y="102"/>
<g transform="translate(519,98)"><path d="M-13-10C-7-15 3-12 10-12 15-12 15-5 11-4 5-1-2 2-9-2-12-3-15-7-13-10Z" fill="#d5d4cf" stroke="#c0bfb8"/><rect x="-1" y="1" width="13" height="13" rx="2" fill="#ccc9c0"/><path d="M5 3V12M1 5L10 10M1 10L10 5" stroke="#fff" stroke-width="1.6"/></g>
<g transform="translate(560,98)"><path d="M-14-9H4M-12-9V8" stroke="#c8c8c8"/><path d="M-5 12L8-3 11 0-1 14ZM6 12L-5-2-2-4 9 9Z" fill="#cfcfca" stroke="#bcbcb6" stroke-width=".8"/></g>
<use href="#car" x="586" y="102"/>
<g transform="translate(616,98)"><rect x="-13" y="-12" width="26" height="8" fill="#d5d3cb"/><rect x="-13" y="-2" width="26" height="8" fill="#d5d3cb"/><rect x="-13" y="8" width="26" height="6" fill="#d5d3cb"/><path d="M11-14L14-11-1 12-6 14-5 9Z" fill="#e8e8e4" stroke="#c3c3bd"/></g>
<g transform="translate(655,98)"><rect x="-12" y="-14" width="22" height="5" fill="#cfc7c3"/><rect x="-10" y="-8" width="18" height="22" fill="#d5cdc8" stroke="#bbb2ad"/><path d="M-5-6V12M-1-6V12M3-6V12" stroke="#eee" stroke-width="1.6"/></g>
<g transform="translate(698,98)"><path d="M-13-10L10 5M-13 7L10-10" stroke="#cfcfca" stroke-width="2"/><circle cx="11" cy="7" r="3.6" fill="none" stroke="#c3c3bd" stroke-width="2"/><circle cx="11" cy="-7" r="3.6" fill="none" stroke="#c3c3bd" stroke-width="2"/></g>
<g transform="translate(739,98)"><path d="M-4-14H6L10-10V6H-4Z" fill="#f5f5f5" stroke="#c9c9c9"/><path d="M-10-6H1L5-2V14H-10Z" fill="#f7f7f7" stroke="#c4c4c4"/><path d="M-7 0H2M-7 4H2M-7 8H2" stroke="#d5d5d5"/></g>
<g transform="translate(781,98)"><rect x="-11" y="-12" width="22" height="26" rx="1.5" fill="#e8e8e6" stroke="#c6c6c2"/><rect x="-5" y="-14" width="10" height="5" fill="#d6d6d2"/><path d="M-7-4H7M-7 1H7M-7 6H7" stroke="#d0d0d0" stroke-width="1.3"/></g>
<g transform="translate(822,98)"><path d="M-11-1L-1-11V-5C8-5 12 1 10 11 7 4 3 3-1 3V9Z" fill="#d7d3cc"/></g>
<g transform="translate(863,98)"><path d="M11-1L1-11V-5C-8-5-12 1-10 11-7 4-3 3 1 3V9Z" fill="#d7d7d2"/></g>
</g>
<g transform="translate(380,98)"><path d="M9-14L14-11-3 11-9 14-9 7Z" fill="#f3d93f" stroke="#8d7a2c"/><path d="M-9 7L-3 11-9 14Z" fill="#444"/></g>
<use href="#grip" x="895" y="98"/>
<g transform="translate(922,98)"><path d="M-13 0L-6-7H13V7H-6Z" fill="#f5d935" stroke="#c9a516" stroke-width="1.2"/><text x="3" y="4.5" font-size="12" font-weight="bold" fill="#333" text-anchor="middle">abc</text></g>
<g transform="translate(966,98)"><path d="M-12-4A10 10 0 0 1 4-12L-3-2Z" fill="#e8c93a"/><path d="M4-12A10 10 0 0 1 5 5L-3-2Z" fill="#c0322c"/><path d="M-12-4L-3-2 5 5A10 10 0 0 1-12-4Z" fill="#4c9f46"/><circle cx="-3" cy="-2" r="10" fill="none" stroke="#222" stroke-width="1"/><rect x="2" y="5" width="4" height="10" fill="#efcb30"/><rect x="7" y="-1" width="4" height="16" fill="#3a9a3c"/><rect x="12" y="6" width="4" height="9" fill="#b73b2c"/></g>
<path d="M990 88V110M1082 88V110" stroke="#ccc"/>
<g transform="translate(1015,96)"><path d="M-14 0L-8-6H11V6H-8Z" fill="#d8e6f6" stroke="#6a9fdc" stroke-width="1.3"/><text x="0" y="4" font-size="11" font-weight="bold" fill="#333" text-anchor="middle">ab</text><rect x="8" y="3" width="2.5" height="7" fill="#999"/><circle cx="9" cy="13" r="5.5" fill="#a8283a"/></g>
<g transform="translate(1055,98)"><path d="M-13 0L-7-7H13V7H-7Z" fill="#fbe9e9" stroke="#e8212b" stroke-width="1.3"/><text x="3" y="4.5" font-size="11.5" font-weight="bold" fill="#e8212b" text-anchor="middle">abc</text></g>
<g opacity=".75"><g transform="translate(1110,96)"><path d="M-10 0L-4-6H12V6H-4Z" fill="#e0ddd3"/><text x="1" y="4" font-size="10.5" font-weight="bold" fill="#b5b0a3" text-anchor="middle">ab</text><circle cx="9" cy="11" r="6" fill="#b5afad"/></g>
<g transform="translate(1147,95)"><use href="#tag"/><path d="M-7 14C-2 9 6 9 11 14 6 19-2 19-7 14Z" fill="#f0f0f0" stroke="#c8c8c8"/><circle cx="2" cy="14" r="3" fill="#c5c5c5"/></g>
<g transform="translate(1188,95)"><use href="#tag"/><rect x="2" y="7" width="13" height="13" rx="2" fill="#cfcfcf"/><path d="M4 13.5H9V10L14 13.5 9 17V13.5" fill="#fff" stroke="#fff"/></g>
<g transform="translate(1231,95)"><use href="#tag"/><rect x="2" y="7" width="13" height="13" rx="2" fill="#cfcfcf"/><circle cx="8.5" cy="13.5" r="3.5" fill="none" stroke="#fff" stroke-width="2"/></g>
<g transform="translate(1272,95)"><use href="#tag"/><rect x="2" y="7" width="13" height="13" rx="2" fill="#cfccc4"/><path d="M5 17L11 10 13 12 7 18Z" fill="#fff"/></g></g>
<use href="#grip" x="1304" y="98"/>
<g transform="translate(1333,95)"><circle r="14.5" fill="#a9c0de" stroke="#3d5a82" stroke-width="1.2"/><path d="M-10-6C-6-11-1-7 3-10 6-7 2-4-3-4-6-3-8-4-10-6ZM4-3 10-5 11 1 6 1ZM-11 0-5 1-7 6Z" fill="#3b5f8c"/><path d="M-11-2H11M0-14V2M-8-9C-3-5 3-5 8-9" fill="none" stroke="#dfe8f3" stroke-width=".8"/><path d="M-9 6H-2V13H-9ZM3 6H10V13H3ZM-2 7H3V11H-2Z" fill="#111"/><ellipse cx="-6.5" cy="14" rx="6.5" ry="4.5" fill="#111"/><ellipse cx="7.5" cy="14" rx="6.5" ry="4.5" fill="#111"/><ellipse cx="-6.5" cy="14" rx="3" ry="1.6" fill="#777"/><ellipse cx="7.5" cy="14" rx="3" ry="1.6" fill="#777"/></g>
<use href="#grip" x="1365" y="98"/>
<g transform="translate(1394,98)"><path d="M0-13C-7-13-6-10-6-6H1V-4H-9C-13-4-13 0-13 3-13 7-11 8-8 8H-5V4C-5 1-3-1 0-1H6C8-1 9-3 9-5V-9C9-12 6-13 0-13Z" fill="#3d77aa"/><path d="M0 14C7 14 6 11 6 7H-1V5H9C13 5 13 1 13-2 13-6 11-7 8-7H5V-3C5 0 3 2 0 2H-6C-8 2-9 4-9 6V10C-9 13-6 14 0 14Z" fill="#f7d34a"/><circle cx="-3.5" cy="-9.5" r="1.3" fill="#fff"/><path d="M6 9L13 12 6 15" fill="none" stroke="#555" stroke-width="1.3"/></g>
<use href="#grip" x="1426" y="98"/>
<g transform="translate(1456,98)"><rect x="-13" y="-14" width="25" height="27" fill="#2f3d4f"/><rect x="-7" y="-13" width="18" height="25" fill="#6492c6"/><text x="2" y="6" font-size="17" fill="#fff" text-anchor="middle">?</text></g>
<use href="#grip" x="1488" y="98"/>

<!-- Browser dock -->
<g id="dockbtn"><rect x="328.5" y="129" width="12" height="12" rx="2" fill="none" stroke="#666"/><rect x="332" y="131.5" width="5.5" height="5.5" fill="none" stroke="#555"/><rect x="330.5" y="134" width="5" height="5" fill="#f0f0f0" stroke="#555"/><rect x="345" y="129" width="12" height="12" rx="2" fill="none" stroke="#666"/><path d="M348 132L354 138M354 132L348 138" stroke="#333" stroke-width="1.6"/></g>
<use href="#dockbtn" y="402"/>
<g transform="translate(13,165)"><rect x="-8.5" y="-9" width="15" height="15" fill="#fff" stroke="#888" stroke-width="1.3"/><circle cx="6" cy="6" r="4" fill="#67a868"/><path d="M4 6H8M6 4V8" stroke="#fff" stroke-width="1.2"/></g>
<g transform="translate(44,165) scale(.72)"><path d="M-12-1C-12-10-2-14 7-10L11-13 13-1 1-3 5-6C-1-8-7-6-7 1Z" fill="#5a95d0"/><path d="M12 1C12 10 2 14-7 10L-11 13-13 1-1 3-5 6C1 8 7 6 7-1Z" fill="#4f8cca"/></g>
<g transform="translate(76,165)"><path d="M-9-9H9L2 0V10L-2 8V0Z" fill="#6f96c7"/><rect x="-9" y="-9" width="18" height="3" fill="#f8de45"/></g>
<g transform="translate(108,165)"><path d="M-10-8H-4V8H-10Z" fill="none" stroke="#b0b0b0"/><path d="M-9-4H-5M-9 1H-5" stroke="#e29a2c" stroke-width="2"/><path d="M3 9V-3H8L2-9-4-3H0V9Z" transform="translate(2,0)" fill="#5a86bd"/></g>
<g transform="translate(138,165)"><circle r="8.5" fill="#6a95c9" stroke="#507cb2"/><text y="4.5" font-size="12" font-weight="bold" font-style="italic" fill="#fff" text-anchor="middle" style="font-family:'Liberation Serif',serif">i</text></g>
<path d="M351 190.5l-4.5 5h9z" fill="#666"/>
<path d="M346.5 520l4.5 5 4.5-5z" fill="#666"/>

<!-- tree icons -->
<path transform="translate(28,198)" d="M0-10L2.9-3.3 10-3 4.5 1.8 6.5 9 0 5 -6.5 9-4.5 1.8-10-3-2.9-3.3Z" fill="#fdf28c" stroke="#d4b81d" stroke-width="1.2"/>
<g transform="translate(28,220)"><path d="M-8-9H8V9H-8Z" fill="#ececec" stroke="#a5a5a5"/><path d="M-5-9V9" stroke="#c5c5c5" stroke-width="2"/><path d="M1-10H5V-2L3 0 1-2Z" fill="#6a95c9"/></g>
<g transform="translate(28,243)"><rect x="-8.5" y="-7" width="17" height="15" fill="#f0f0f0" stroke="#8b8b8b" stroke-width="1.3"/><path d="M-5 0L0-4 5 0M-3.5-1V4H3.5V-1" fill="#fff" stroke="#444"/></g>
<g transform="translate(28,265)"><path d="M-8.5-8h8l2 3h7v13h-17z" fill="#f0f0f0" stroke="#9a9a9a" stroke-width="1.5"/><path d="M-8.5-3H8.5" stroke="#9a9a9a"/></g>
<use href="#ar" x="4" y="220"/><use href="#ar" x="4" y="243"/><path d="M0 263h8l-4 5z" fill="#666"/>
<use href="#fo" x="48" y="288"/><use href="#fo" x="48" y="311"/><use href="#fo" x="48" y="333"/><use href="#fo" x="48" y="356"/><use href="#fo" x="48" y="378"/><use href="#fo" x="48" y="401"/><use href="#fo" x="48" y="423"/><use href="#fo" x="48" y="446"/><use href="#fo" x="48" y="469"/><use href="#fo" x="48" y="491"/><use href="#fo" x="48" y="514"/>
<path d="M39.5 534v-4h6l2 3h1" fill="none" stroke="#9a9a9a" stroke-width="1.5"/>
<use href="#ar" x="24" y="287"/><use href="#ar" x="24" y="310"/><use href="#ar" x="24" y="332"/><use href="#ar" x="24" y="355"/><use href="#ar" x="24" y="377"/><use href="#ar" x="24" y="400"/><use href="#ar" x="24" y="422"/><use href="#ar" x="24" y="445"/><use href="#ar" x="24" y="467"/><use href="#ar" x="24" y="490"/><use href="#ar" x="24" y="512"/>
<path d="M168 538.5H190" stroke="#aaa" stroke-dasharray="1 3"/>
<path d="M365 533V560" stroke="#aaa" stroke-dasharray="1 3"/>

<!-- layer toolbar -->
<g transform="translate(13,585)"><path d="M-9 3L-2-4 2 1-3 7Z" fill="#e8c832"/><path d="M-9 3L-3 7-7 8Z" fill="#d2453a"/><path d="M-2-4L9-9 10-7 2 1Z" fill="#b6803c"/></g>
<g transform="translate(44,585)"><rect x="-8" y="-4" width="12" height="13" fill="#e6e6e6" stroke="#8f8f8f"/><rect x="-4" y="-9" width="9" height="15" fill="#f0f0f0" stroke="#8f8f8f"/><circle cx="5" cy="6" r="4.5" fill="#67a868"/><path d="M3 6H7M5 4V8" stroke="#fff" stroke-width="1.2"/></g>
<g transform="translate(76,585)"><path d="M-10-1C-5-7 5-7 10-1 5 5-5 5-10-1Z" fill="#e6eef6" stroke="#8a8a8a"/><circle cy="-1" r="4" fill="#5f8cc2"/><circle cy="-1" r="1.6" fill="#1f3b5c"/><path d="M4 7h6l-3 3z" fill="#555"/></g>
<g transform="translate(108,585)"><path d="M-9-9H9L2 0V10L-2 8V0Z" fill="#6f96c7"/><rect x="-9" y="-9" width="18" height="3" fill="#f8de45"/><path d="M5 7h6l-3 3z" fill="#555"/></g>
<g transform="translate(135,584)"><text x="-1" y="4" font-size="19" fill="#7b4f86" text-anchor="middle" style="font-family:'Liberation Serif',serif">ε</text><path d="M3 3H12L11 10H4Z" fill="#b8b8b8"/></g>
<use href="#car" x="160" y="585"/>
<g transform="translate(186,585)"><path d="M-10-8H-4V8H-10Z" fill="none" stroke="#b0b0b0"/><path d="M-9-4H-5M-9 1H-5" stroke="#e29a2c" stroke-width="2"/><path d="M3-9V3H8L2 9-4 3H0V-9Z" transform="translate(2,0)" fill="#5a86bd"/></g>
<g transform="translate(216,585)"><path d="M-10-8H-4V8H-10Z" fill="none" stroke="#b0b0b0"/><path d="M-9-4H-5M-9 1H-5" stroke="#e29a2c" stroke-width="2"/><path d="M3 9V-3H8L2-9-4-3H0V9Z" transform="translate(2,0)" fill="#5a86bd"/></g>
<g transform="translate(246,585)"><rect x="-8.5" y="-9" width="15" height="15" fill="#fff" stroke="#888" stroke-width="1.3"/><rect x="1" y="3" width="9" height="6" rx="2.5" fill="#e8555a"/><path d="M3 6H8" stroke="#fff" stroke-width="1.4"/></g>
<!-- layer row -->
<path d="M4 613L9 618 4 623Z" fill="#173a5c"/>
<rect x="23.5" y="609.5" width="17" height="17" fill="#fff" stroke="#bcd"/>
<path d="M27 618L30.5 622 37 612.5" fill="none" stroke="#000" stroke-width="2"/>
<path d="M49 613C54 610 57 614 62 612 66 611 68 613 67 617 67 622 66 623 62 621 57 619 53 623 50 621 48 619 48 615 49 613Z" fill="#e8e8e8" stroke="#b8c6d4"/>
</svg>
</body></html>
